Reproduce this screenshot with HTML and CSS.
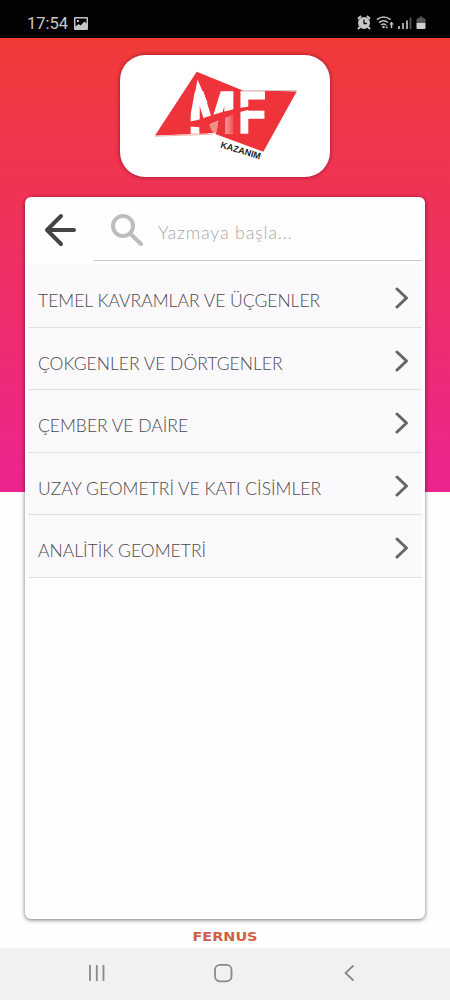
FILE: index.html
```html
<!DOCTYPE html>
<html lang="tr">
<head>
    <meta charset="UTF-8">
    <meta name="viewport" content="width=device-width, initial-scale=1.0">
    <title>MF Kazanım</title>
    <link rel="stylesheet" href="styles.css">
</head>
<body>
    <div class="status-bar">
        <span class="clock">17:54</span>
        <svg class="picture-icon" width="14" height="13" viewBox="0 0 14 13">
            <path fill="#c4c4c4" fill-rule="evenodd" d="M1 0h12a1 1 0 0 1 1 1v11a1 1 0 0 1-1 1H1a1 1 0 0 1-1-1V1a1 1 0 0 1 1-1zM1.5 1.5v8l3-2.5 2 1.5 4-4 2 2v-5zM3 3h2v2H3z"/>
        </svg>
        <svg class="status-icons" width="70" height="16" viewBox="0 0 70 16">
            <g fill="none" stroke="#c8c8c8" stroke-width="2">
                <circle cx="7" cy="8" r="5" fill="#c8c8c8"/>
                <path d="M1 4l3-3M13 4l-3-3M3 12l-2 2M11 12l2 2"/>
                <path stroke="#111" stroke-width="1.3" d="M7 4.5V8.5h3"/>
            </g>
            <g fill="none" stroke="#bdbdbd" stroke-width="1.6">
                <path d="M20 4.5q6.5-5 13.5 0M22 7.5q4.7-3.5 9 0M24 10q2.5-2 5 0"/>
            </g>
            <circle cx="26.5" cy="12" r="1.3" fill="#bdbdbd"/>
            <path fill="#c8c8c8" d="M34.5 6.5l2.2 3h-1.4v3.5h-1.6V9.5h-1.4z"/>
            <path fill="#777" d="M29 10h1.3v2h1.2l-1.8 2-1.8-2H29z"/>
            <path stroke="#b5b5b5" stroke-width="1.8" d="M42 14v-3M46 14V8M50 14V5.5"/>
            <path stroke="#555" stroke-width="1.8" d="M53.5 14V2.5"/>
            <path fill="#555" d="M60.5 3h2V1.5h3V3h2v5.5h-7zM59.5 4h9v4h-9z"/>
            <path fill="#d0d0d0" d="M59.5 8h9v5a1 1 0 0 1-1 1h-7a1 1 0 0 1-1-1z"/>
        </svg>
    </div>

    <div class="app">
        <div class="logo-card">
            <svg width="210" height="122" viewBox="120 55 210 122">
                <defs>
                    <linearGradient id="fade" x1="0" y1="0" x2="1" y2="0">
                        <stop offset="0" stop-color="#ee333a" stop-opacity="0.5"/>
                        <stop offset="1" stop-color="#ee333a"/>
                    </linearGradient>
                </defs>
                <path fill="#ee333a" d="M196.7 71.7L241.7 90l55 1.5-33.4 60.2-50-18.4L155 135.5z"/>
                <path stroke="#f5b0ad" d="M155 136.2l58-2"/>
                <path stroke="#d5caca" d="M242 90.5h55"/>
                <g class="logo-mf">
                    <text x="187.5" y="132.8" textLength="49" lengthAdjust="spacingAndGlyphs">M</text>
                    <text x="238" y="132.8" textLength="28" lengthAdjust="spacingAndGlyphs">F</text>
                </g>
                <!-- sharp peak on the left side -->
                <path fill="#fff" d="M197.5 79.5l10 23-14.5 2z"/>
                <path fill="#ee333a" d="M188.5 89h6.800L187 134H186z"/>
                <!-- red cut through the letters -->
                <path fill="#ee333a" d="M187 121.5q8 0 18-4 28-10 61-13v3q-15 1-26 4.500-11 4-21 8.500-12 5-19 6.800l-13-1z"/>
                <path fill="#ee333a" d="M199.5 125l11-3 4 11h-15z"/>
                <path fill="#f28d88" d="M209 124.5l9.5-3.5-2 11.5h-4z"/>
                <path fill="#ee333a" d="M218.5 120l7-3v16.8h-9z"/>
                <path fill="url(#fade)" d="M225.5 117l11-4v20.8h-11z"/>
                <text class="logo-name" transform="translate(220 147.5) rotate(16.5)" textLength="41.5">KAZANIM</text>
            </svg>
        </div>

        <div class="panel">
            <div class="search">
                <svg class="back" width="34" height="34" viewBox="0 0 34 34">
                    <path d="M30 17H3M17 3L3 17l14 14"/>
                </svg>
                <div class="search-field">
                    <svg width="34" height="34" viewBox="0 0 34 34">
                        <circle cx="13" cy="13" r="10"/>
                        <path d="M20 20.5L31 31"/>
                    </svg>
                    <span>Yazmaya başla...</span>
                </div>
            </div>
            <ul class="topics">
                <li><span>TEMEL KAVRAMLAR VE ÜÇGENLER</span><svg width="14" height="22" viewBox="0 0 14 22"><path d="M2 2l9.5 9L2 20"/></svg></li>
                <li><span>ÇOKGENLER VE DÖRTGENLER</span><svg width="14" height="22" viewBox="0 0 14 22"><path d="M2 2l9.5 9L2 20"/></svg></li>
                <li><span>ÇEMBER VE DAİRE</span><svg width="14" height="22" viewBox="0 0 14 22"><path d="M2 2l9.5 9L2 20"/></svg></li>
                <li><span>UZAY GEOMETRİ VE KATI CİSİMLER</span><svg width="14" height="22" viewBox="0 0 14 22"><path d="M2 2l9.5 9L2 20"/></svg></li>
                <li><span>ANALİTİK GEOMETRİ</span><svg width="14" height="22" viewBox="0 0 14 22"><path d="M2 2l9.5 9L2 20"/></svg></li>
            </ul>
        </div>

        <svg class="brand" width="66" height="13" viewBox="0 0 66 13">
            <text x="0.5" y="11" textLength="65" lengthAdjust="spacingAndGlyphs">FERNUS</text>
        </svg>
    </div>

    <div class="nav-bar">
        <svg width="20" height="20" viewBox="0 0 20 20"><path d="M3 2v16M9.8 2v16M16.5 2v16"/></svg>
        <svg width="20" height="20" viewBox="0 0 20 20"><rect x="1" y="1.8" width="16.5" height="16.5" rx="5"/></svg>
        <svg width="20" height="20" viewBox="0 0 20 20"><path d="M13.5 2.5L5.5 10l8 7.5"/></svg>
    </div>
</body>
</html>
```
FILE: styles.css
```css
* {
    box-sizing: border-box;
}
body {
    width: 450px;
    height: 1000px;
    margin: 0;
    display: flex;
    flex-direction: column;
    font-family: Lato, sans-serif;
    background-color: #fefefe;
    overflow: hidden;
}
.status-bar {
    height: 38px;
    padding: 8px 23px 0 27px;
    display: flex;
    align-items: center;
    background-color: #020103;
}
.clock {
    font-family: Roboto, sans-serif;
    font-size: 16.5px;
    color: #c8c8c8;
}
.picture-icon {
    margin-left: 6px;
}
.status-icons {
    margin-left: auto;
}
.app {
    height: 910px;
    padding-top: 17px;
    display: flex;
    flex-direction: column;
    align-items: center;
    background: linear-gradient(#f13a38, #ec258f) no-repeat 0 0 / 100% 454px;
}
.logo-card {
    width: 210px;
    height: 122px;
    border-radius: 25px;
    background-color: #fff;
    box-shadow: 0 0 4px rgba(80, 0, 20, 0.6);
    overflow: hidden;
}
.logo-card svg {
    display: block;
    fill: none;
}
.logo-mf {
    font-family: "Liberation Sans", sans-serif;
    font-size: 60px;
    font-weight: bold;
    fill: #fff;
    stroke: #fff;
    stroke-width: 1.5;
}
.logo-name {
    font-family: "Liberation Sans", sans-serif;
    font-size: 9px;
    font-weight: bold;
    fill: #222;
}
.panel {
    width: 400px;
    height: 722px;
    margin-top: 20px;
    padding: 0 3px;
    border-radius: 6px;
    background-color: #fefefe;
    box-shadow: 0 1px 4px rgba(0, 0, 0, 0.55);
}
.search {
    height: 64px;
    display: flex;
    align-items: flex-start;
}
.back {
    margin: 16px 0 0 16px;
    fill: none;
    stroke: #444;
    stroke-width: 4;
    stroke-linecap: round;
    stroke-linejoin: round;
}
.search-field {
    flex: 1;
    height: 64px;
    margin-left: 16px;
    padding: 7px 0 0 16px;
    display: flex;
    align-items: center;
    border-bottom: 1px solid #cfc7cd;
}
.search-field svg {
    margin-top: -5px;
    fill: none;
    stroke: #bdbdbd;
    stroke-width: 4;
    stroke-linecap: round;
}
.search-field span {
    margin-left: 14px;
    font-size: 18px;
    font-weight: 300;
    letter-spacing: 0.75px;
    color: #aaa7ab;
}
.topics {
    margin: 4px 0 0;
    padding: 0;
    list-style: none;
    background-color: #fbf9fc;
}
.topics li {
    height: 62.5px;
    padding: 10px 13px 0 10px;
    display: flex;
    align-items: center;
    justify-content: space-between;
    border-bottom: 1px solid #e2e0e3;
    font-size: 17.5px;
    font-weight: 300;
    color: #4c4a4d;
}
.topics svg {
    margin-top: -5px;
    fill: none;
    stroke: #666;
    stroke-width: 3;
    stroke-linecap: round;
    stroke-linejoin: round;
}
.brand {
    margin-top: 11px;
    font-family: "DejaVu Sans", sans-serif;
    font-size: 12px;
    font-weight: bold;
    fill: #d0603f;
}
.nav-bar {
    height: 52px;
    padding: 0 90px 2px 87px;
    display: flex;
    align-items: center;
    justify-content: space-between;
    background-color: #f2f0f3;
}
.nav-bar svg {
    fill: none;
    stroke: #8a888b;
    stroke-width: 1.8;
}
```
